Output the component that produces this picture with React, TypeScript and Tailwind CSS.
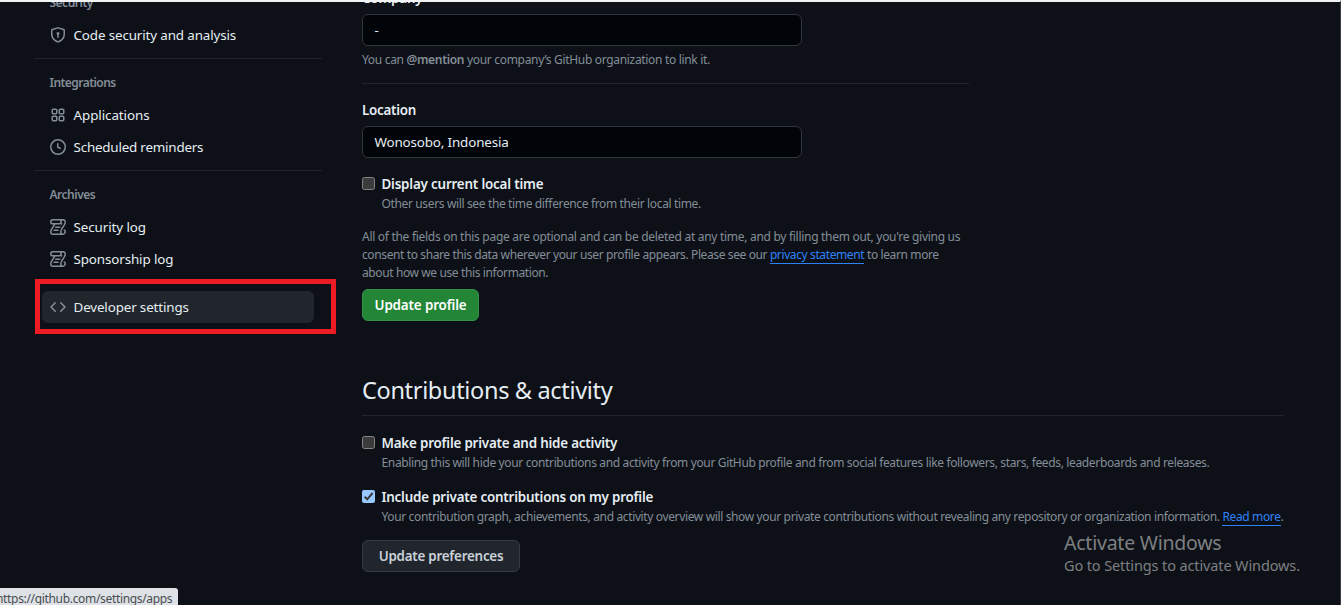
import { ReactNode } from "react";

const paths = {
  shield:
    "m8.533.133 5.25 1.68A1.75 1.75 0 0 1 15 3.48V7c0 1.566-.32 3.182-1.303 4.682-.983 1.498-2.585 2.813-5.032 3.855a1.697 1.697 0 0 1-1.33 0c-2.447-1.042-4.049-2.357-5.032-3.855C1.32 10.182 1 8.566 1 7V3.48a1.755 1.755 0 0 1 1.217-1.667l5.25-1.68a1.748 1.748 0 0 1 1.066 0Zm-.61 1.429.001.001-5.25 1.68a.251.251 0 0 0-.174.237V7c0 1.36.275 2.666 1.057 3.859.784 1.194 2.121 2.342 4.366 3.298a.196.196 0 0 0 .154 0c2.245-.957 3.582-2.103 4.366-3.297C13.225 9.666 13.5 8.358 13.5 7V3.48a.25.25 0 0 0-.174-.238l-5.25-1.68a.25.25 0 0 0-.153 0ZM9.5 6.5c0 .536-.286 1.032-.75 1.3v2.45a.75.75 0 0 1-1.5 0V7.8A1.5 1.5 0 1 1 9.5 6.5Z",
  apps: "M1.5 3.25c0-.966.784-1.75 1.75-1.75h2.5c.966 0 1.75.784 1.75 1.75v2.5A1.75 1.75 0 0 1 5.75 7.5h-2.5A1.75 1.75 0 0 1 1.5 5.75Zm7 0c0-.966.784-1.75 1.75-1.75h2.5c.966 0 1.75.784 1.75 1.75v2.5a1.75 1.75 0 0 1-1.75 1.75h-2.5A1.75 1.75 0 0 1 8.5 5.75Zm-7 7c0-.966.784-1.75 1.75-1.75h2.5c.966 0 1.75.784 1.75 1.75v2.5a1.75 1.75 0 0 1-1.75 1.75h-2.5a1.75 1.75 0 0 1-1.75-1.75Zm7 0c0-.966.784-1.75 1.75-1.75h2.5c.966 0 1.75.784 1.75 1.75v2.5a1.75 1.75 0 0 1-1.75 1.75h-2.5a1.75 1.75 0 0 1-1.75-1.75ZM3.25 3a.25.25 0 0 0-.25.25v2.5c0 .138.112.25.25.25h2.5A.25.25 0 0 0 6 5.75v-2.5A.25.25 0 0 0 5.75 3Zm7 0a.25.25 0 0 0-.25.25v2.5c0 .138.112.25.25.25h2.5a.25.25 0 0 0 .25-.25v-2.5a.25.25 0 0 0-.25-.25Zm-7 7a.25.25 0 0 0-.25.25v2.5c0 .138.112.25.25.25h2.5a.25.25 0 0 0 .25-.25v-2.5a.25.25 0 0 0-.25-.25Zm7 0a.25.25 0 0 0-.25.25v2.5c0 .138.112.25.25.25h2.5a.25.25 0 0 0 .25-.25v-2.5a.25.25 0 0 0-.25-.25Z",
  clock:
    "M8 0a8 8 0 1 1 0 16A8 8 0 0 1 8 0ZM1.5 8a6.5 6.5 0 1 0 13 0 6.5 6.5 0 0 0-13 0Zm7-3.25v2.992l2.028.812a.75.75 0 0 1-.557 1.392l-2.5-1A.751.751 0 0 1 7 8.25v-3.5a.75.75 0 0 1 1.5 0Z",
  code: "m11.28 3.22 4.25 4.25a.75.75 0 0 1 0 1.06l-4.25 4.25a.749.749 0 0 1-1.275-.326.749.749 0 0 1 .215-.734L13.94 8l-3.72-3.72a.749.749 0 0 1 .326-1.275.749.749 0 0 1 .734.215Zm-6.56 0a.751.751 0 0 1 1.042.018.751.751 0 0 1 .018 1.042L2.06 8l3.72 3.72a.749.749 0 0 1-.326 1.275.749.749 0 0 1-.734-.215L.47 8.53a.75.75 0 0 1 0-1.06Z",
  log: "M5 8.25a.75.75 0 0 1 .75-.75h4a.75.75 0 0 1 0 1.5h-4A.75.75 0 0 1 5 8.25ZM4 10.5A.75.75 0 0 0 4 12h4a.75.75 0 0 0 0-1.5H4ZM13-.005c1.654 0 3 1.328 3 3 0 .982-.338 1.933-.783 2.818-.443.879-1.028 1.758-1.582 2.588l-.011.017c-.568.853-1.104 1.659-1.501 2.446-.398.789-.623 1.494-.623 2.136a1.5 1.5 0 1 0 2.333-1.248.75.75 0 0 1 .834-1.246A3 3 0 0 1 13 16H3a3 3 0 0 1-3-3c0-1.582.891-3.135 1.777-4.506.209-.322.418-.637.623-.946.473-.709.923-1.386 1.287-2.048H2.51c-.576 0-1.381-.133-1.907-.783A2.68 2.68 0 0 1 0 2.995a3 3 0 0 1 3-3Zm0 1.5a1.5 1.5 0 0 0-1.5 1.5c0 .476.223.834.667 1.132A.75.75 0 0 1 11.75 5.5H5.368c-.467 1.003-1.141 2.015-1.773 2.963-.192.289-.381.571-.558.845C2.13 10.711 1.5 11.916 1.5 13A1.5 1.5 0 0 0 3 14.5h7.401A2.989 2.989 0 0 1 10 13c0-.979.338-1.928.784-2.812.441-.874 1.023-1.748 1.575-2.576l.017-.026c.568-.853 1.103-1.658 1.501-2.448.398-.79.623-1.497.623-2.143 0-.838-.669-1.5-1.5-1.5Zm-10 0a1.5 1.5 0 0 0-1.5 1.5c0 .321.1.569.27.778.097.12.325.227.74.227h7.674A2.737 2.737 0 0 1 10 2.995c0-.546.146-1.059.401-1.5Z",
};

type IconName = keyof typeof paths;

function Icon({ name }: { name: IconName }) {
  return (
    <svg width="16" height="16" viewBox="0 0 16 16" className="shrink-0 text-[#848d97]" fill="currentColor">
      <path d={paths[name]} />
    </svg>
  );
}

function NavItem({ icon, active, children }: { icon: IconName; active?: boolean; children: ReactNode }) {
  return (
    <a
      className={
        active
          ? "mx-2 flex h-8 items-center gap-[7.5px] rounded-md bg-[#21262d] pl-2 text-[13.4px] whitespace-nowrap text-[#e6edf3]"
          : "mx-2 flex h-8 items-center gap-[7.5px] pl-2 text-[13.4px] whitespace-nowrap text-[#e6edf3]"
      }
    >
      <Icon name={icon} />
      {children}
    </a>
  );
}

function Divider() {
  return <div className="mt-[7px] h-px bg-[#20252c]" />;
}

function NavHeading({ children }: { children: ReactNode }) {
  return <h3 className="flex h-10 items-center pt-2 pl-[15.5px] text-xs font-semibold text-[#848d97]">{children}</h3>;
}

function Check({ checked }: { checked?: boolean }) {
  return checked ? (
    <span className="flex size-[13px] shrink-0 items-center justify-center rounded-[2px] bg-[#99c8ff]">
      <svg width="13" height="13" viewBox="0 0 13 13" fill="none" stroke="#3b3b3b" strokeWidth="2">
        <path d="M2.6 6.7 5.2 9.3 10.6 3" />
      </svg>
    </span>
  ) : (
    <span className="block size-[13px] shrink-0 rounded-[2.5px] border border-[#858585] bg-[#3b3b3b]" />
  );
}

function Option({ checked, label, children }: { checked?: boolean; label: ReactNode; children: ReactNode }) {
  return (
    <div className="flex gap-[6.5px]">
      <div className="pt-[3px]">
        <Check checked={checked} />
      </div>
      <div className="whitespace-nowrap">
        <div className="h-5 text-[13.4px] leading-5 font-semibold text-[#e6edf3]">{label}</div>
        <p className="h-5 text-xs leading-5 text-[#848d97]">{children}</p>
      </div>
    </div>
  );
}

function Field({ children }: { children: ReactNode }) {
  return (
    <div className="flex h-8 w-[440px] items-center rounded-md border border-[#30363d] bg-[#010409] pl-[11.5px] text-[13.4px] text-[#e6edf3]">
      {children}
    </div>
  );
}

export default function App() {
  return (
    <div className="relative h-[605px] w-[1341px] overflow-hidden border-t-2 border-r border-t-[#f0f2f4] border-r-[#3b3d40] bg-[#0d1117] font-['Noto_Sans',sans-serif]">
      <div className="flex">
        <nav className="ml-[34px] w-72 shrink-0">
          <h3 className="flex h-[17px] items-start pl-[15.5px] text-xs leading-[2px] font-semibold text-[#848d97]"><span className="tracking-[-0.5px]">Security</span></h3>
          <NavItem icon="shield"><span className="tracking-[-0.13px]">Code security and analysis</span></NavItem>
          <Divider />
          <NavHeading><span className="tracking-[-0.55px]">Integrations</span></NavHeading>
          <NavItem icon="apps"><span className="tracking-[-0.08px]">Applications</span></NavItem>
          <NavItem icon="clock"><span className="tracking-[-0.2px]">Scheduled reminders</span></NavItem>
          <Divider />
          <NavHeading><span className="tracking-[-0.48px]">Archives</span></NavHeading>
          <NavItem icon="log"><span className="tracking-[-0.09px]">Security log</span></NavItem>
          <NavItem icon="log"><span className="tracking-[-0.12px]">Sponsorship log</span></NavItem>
          <Divider />
          <div className="h-2" />
          <NavItem icon="code" active><span className="tracking-[-0.14px]">Developer settings</span></NavItem>
        </nav>

        <main className="ml-10 w-[922px] shrink-0">
          <div className="flex h-3 items-end pb-[6px] text-[13.4px] leading-5 font-semibold text-[#e6edf3]"><span className="tracking-[-0.2px]">Company</span></div>
          <Field>-</Field>
          <p className="mt-1 h-5 text-xs leading-5 text-[#848d97]">
            <span className="tracking-[-0.32px]">You can <b className="font-semibold">@mention</b> your company’s GitHub organization to link it.</span>
          </p>
          <div className="mt-[13px] h-px w-[607px] bg-[#20252c]" />
          <div className="mt-4 h-[26px] text-[13.4px] leading-5 font-semibold text-[#e6edf3]"><span className="tracking-[-0.27px]">Location</span></div>
          <Field><span className="tracking-[-0.15px]">Wonosobo, Indonesia</span></Field>
          <div className="mt-4">
            <Option label={<span className="tracking-[-0.19px]">Display current local time</span>}>
              <span className="tracking-[-0.36px]">Other users will see the time difference from their local time.</span>
            </Option>
          </div>
          <p className="mt-[14px] text-xs leading-[18px] whitespace-nowrap text-[#848d97]">
            <span className="tracking-[-0.293px]">All of the fields on this page are optional and can be deleted at any time, and by filling them out, you're giving us</span><br />
            <span className="tracking-[-0.386px]">consent to share this data wherever your user profile appears. Please see our <a className="border-b border-[#2f81f7] text-[#2f81f7]">privacy statement</a> to learn more</span><br />
            <span className="tracking-[-0.39px]">about how we use this information.</span>
          </p>
          <button className="mt-[7px] flex h-8 w-[117px] items-center justify-center rounded-md border border-[#36914a] bg-[#238636] text-[13.4px] font-semibold text-white"><span className="tracking-[-0.14px]">Update profile</span></button>
          <h2 className="mt-[54px] h-[41px] border-b border-[#20252c] text-[23.5px] leading-[30px] text-[#e6edf3]"><span className="tracking-[-0.33px]">Contributions &amp; activity</span></h2>
          <div className="mt-[17px] flex flex-col gap-[14px]">
            <Option label={<span className="tracking-[-0.2px]">Make profile private and hide activity</span>}>
              <span className="tracking-[-0.356px]">Enabling this will hide your contributions and activity from your GitHub profile and from social features like followers, stars, feeds, leaderboards and releases.</span>
            </Option>
            <Option checked label={<span className="tracking-[-0.2px]">Include private contributions on my profile</span>}>
              <span className="tracking-[-0.365px]">Your contribution graph, achievements, and activity overview will show your private contributions without revealing any repository or organization information. <a className="border-b border-[#2f81f7] text-[#2f81f7]">Read more</a>.</span>
            </Option>
          </div>
          <button className="mt-[13px] flex h-8 w-[158px] items-center justify-center rounded-md border border-[#363b42] bg-[#21262d] text-[13.4px] font-semibold text-[#c9d1d9]"><span className="tracking-[-0.24px]">Update preferences</span></button>
        </main>
      </div>

      <div className="absolute top-[277px] left-[35px] h-[55px] w-[301px] border-5 border-[#ed1c24]" />
      <div className="absolute top-[529px] left-[1064px] whitespace-nowrap text-[#7d7f82]">
        <div className="text-[19.5px] leading-6 tracking-[-0.23px]">Activate Windows</div>
        <div className="text-[14.5px] leading-5 tracking-[-0.12px]">Go to Settings to activate Windows.</div>
      </div>
      <div className="absolute top-[586px] left-0 h-[17px] w-[178px] overflow-hidden rounded-tr-[3px] bg-[#dee1e6] text-xs leading-[22px] text-[#4a4d51]">
        <div className="-ml-[4px] tracking-[-0.33px] whitespace-nowrap">https://github.com/settings/apps</div>
      </div>
    </div>
  );
}
